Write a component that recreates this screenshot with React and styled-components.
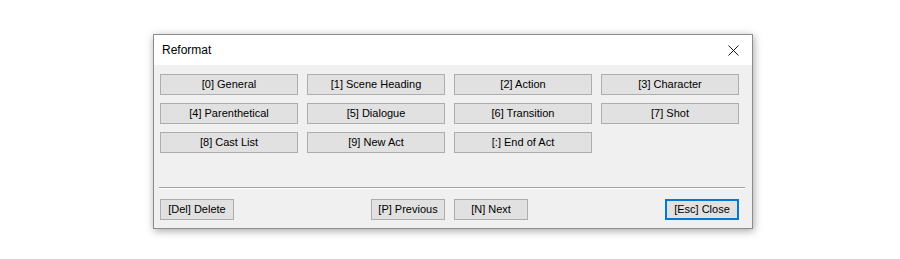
import React from 'react';
import styled, { createGlobalStyle } from 'styled-components';

const GlobalStyle = createGlobalStyle`
  html, body {
    margin: 0;
    padding: 0;
    background: #fff;
  }
  body {
    font-family: "Liberation Sans", Arial, sans-serif;
  }
`;

const Page = styled.div`
  width: 900px;
  height: 259px;
  padding: 34px 0 0 153px;
  box-sizing: border-box;
`;

const Dialog = styled.div`
  width: 600px;
  height: 195px;
  box-sizing: border-box;
  border: 1px solid #8c8c8c;
  background: #f0f0f0;
  box-shadow: 1px 2px 8px rgba(0, 0, 0, 0.35);
  display: flex;
  flex-direction: column;
`;

const TitleBar = styled.div`
  height: 30px;
  background: #fff;
  display: flex;
  align-items: center;
  justify-content: space-between;
  padding: 0 9px 0 8px;
  font-size: 12px;
  color: #000;
`;

const CloseIcon = styled.svg`
  width: 11px;
  height: 11px;
  margin-right: 4px;
`;

const Body = styled.div`
  flex: 1;
  display: flex;
  flex-direction: column;
  padding-top: 9px;
`;

const ButtonGrid = styled.div`
  display: grid;
  grid-template-columns: repeat(4, 138px);
  column-gap: 9px;
  row-gap: 8px;
  margin: 0 0 0 6px;
`;

const Button = styled.button`
  height: 21px;
  width: ${p => p.$w || '100%'};
  justify-self: ${p => p.$align || 'stretch'};
  box-sizing: border-box;
  margin: 0;
  padding: 0 4px;
  background: #e1e1e1;
  border: ${p => (p.$focused ? '2px solid #0078d7' : '1px solid #adadad')};
  font-family: "Liberation Sans", Arial, sans-serif;
  font-size: 11px;
  color: #000;
  line-height: 1;
  cursor: pointer;
`;

const Separator = styled.div`
  margin: 34px 7px 0 5px;
  height: 1px;
  background: #a0a0a0;
  border-bottom: 1px solid #fff;
`;

const Footer = styled(ButtonGrid)`
  margin-top: 10px;
`;

const formats = [
  '[0] General',
  '[1] Scene Heading',
  '[2] Action',
  '[3] Character',
  '[4] Parenthetical',
  '[5] Dialogue',
  '[6] Transition',
  '[7] Shot',
  '[8] Cast List',
  '[9] New Act',
  '[:] End of Act',
];

const App = () => (
  <Page>
    <GlobalStyle />
    <Dialog>
      <TitleBar>
        <span>Reformat</span>
        <CloseIcon viewBox="0 0 11 11">
          <path d="M0.5 0.5 L10.5 10.5 M10.5 0.5 L0.5 10.5" stroke="#1a1a1a" strokeWidth="1" fill="none" />
        </CloseIcon>
      </TitleBar>
      <Body>
        <ButtonGrid>
          {formats.map(f => (
            <Button key={f}>{f}</Button>
          ))}
        </ButtonGrid>
        <Separator />
        <Footer>
          <Button $w="74px" $align="start">[Del] Delete</Button>
          <Button $w="74px" $align="end">[P] Previous</Button>
          <Button $w="74px" $align="start">[N] Next</Button>
          <Button $w="74px" $align="end" $focused>[Esc] Close</Button>
        </Footer>
      </Body>
    </Dialog>
  </Page>
);

export default App;
